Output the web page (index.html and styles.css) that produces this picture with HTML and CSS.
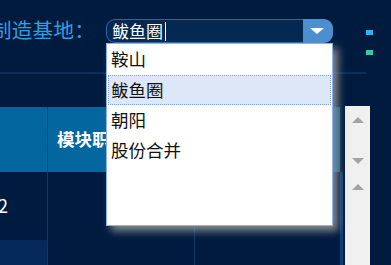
FILE: index.html
```html
<!DOCTYPE html>
<html lang="zh">
<head>
<meta charset="utf-8">
<link rel="stylesheet" href="styles.css">
</head>
<body>
<div class="page">
  <div class="topbar">
    <div class="label">制造基地：</div>
    <div class="combo">
      <div class="field"><span class="value">鲅鱼圈</span><span class="caret"></span></div>
      <div class="btn"><span class="tri-down"></span></div>
      <ul class="dropdown">
        <li class="opt">鞍山</li>
        <li class="opt active">鲅鱼圈</li>
        <li class="opt">朝阳</li>
        <li class="opt">股份合并</li>
      </ul>
    </div>
    <div class="legend">
      <span class="sq cyan"></span>
      <span class="sq teal"></span>
    </div>
  </div>
  <div class="rule"></div>
  <div class="main">
    <div class="table">
      <div class="row head">
        <div class="cell c1"></div>
        <div class="cell c2">模块职责</div>
        <div class="cell c3"></div>
      </div>
      <div class="row body r1">
        <div class="cell c1 num">2</div>
        <div class="cell c2"></div>
        <div class="cell c3"></div>
      </div>
      <div class="row body r2">
        <div class="cell c1"></div>
        <div class="cell c2"></div>
        <div class="cell c3"></div>
      </div>
    </div>
    <div class="scrollbar">
      <span class="arr up a1"></span>
      <span class="arr down a2"></span>
      <span class="arr up a3"></span>
    </div>
  </div>
</div>
</body>
</html>
```

FILE: styles.css
```css
* { box-sizing: border-box; }
html, body {
  margin: 0;
  padding: 0;
  background: #011b3e;
  overflow: hidden;
}
.page {
  width: 391px;
  height: 265px;
  font-family: "Noto Sans CJK SC", "Noto Sans", sans-serif;
}
.topbar {
  height: 72px;
  display: flex;
  align-items: flex-start;
}
.label {
  margin-left: -9px;
  margin-top: 14px;
  width: 115px;
  font-size: 20.5px;
  line-height: 30px;
  color: #2f9fe0;
  letter-spacing: 0.3px;
  white-space: nowrap;
}
.combo {
  position: relative;
  margin-top: 19px;
  display: flex;
  height: 24px;
  width: 227px;
}
.field {
  width: 197px;
  height: 24px;
  border: 1px solid #2a68ab;
  border-right: none;
  border-radius: 9px 0 0 9px;
  background: #052853;
  display: flex;
  align-items: center;
  padding-left: 5px;
}
.value {
  color: #ffffff;
  font-size: 17px;
  line-height: 22px;
}
.caret {
  width: 1px;
  height: 19px;
  background: #ffffff;
  margin-left: 2px;
}
.btn {
  width: 30px;
  height: 24px;
  background: #4c8fd0;
  border-radius: 0 9px 9px 0;
  display: flex;
  align-items: center;
  justify-content: center;
}
.tri-down {
  width: 0;
  height: 0;
  border-left: 7px solid transparent;
  border-right: 7px solid transparent;
  border-top: 6px solid #ffffff;
  margin-left: -3px;
}
.dropdown {
  position: absolute;
  left: 0;
  top: 24px;
  width: 227px;
  height: 183px;
  margin: 0;
  padding: 0 1px;
  list-style: none;
  background: #ffffff;
  border: 1px solid #8fb2ea;
  box-shadow: 5px 5px 8px rgba(150, 150, 150, 0.9);
  z-index: 5;
}
.opt {
  height: 30px;
  line-height: 28px;
  padding-left: 2px;
  font-size: 17.5px;
  color: #111111;
  border: 1px solid transparent;
}
.opt:first-child { height: 31px; }
.opt.active {
  background: #dee7f7;
  border: 1px dotted #7fa5e4;
}
.legend {
  margin-left: 33px;
  margin-top: 30px;
  display: flex;
  flex-direction: column;
  gap: 15px;
}
.sq {
  display: block;
  width: 7px;
  height: 5px;
}
.cyan { background: #2bb4f2; }
.teal { background: #38c9a6; }
.rule {
  width: 366px;
  height: 2px;
  background: #07305f;
}
.main {
  margin-top: 32px;
  display: flex;
  align-items: flex-start;
}
.table {
  width: 343px;
  margin-top: 1px;
}
.row {
  display: grid;
  grid-template-columns: 48px 147px 148px;
}
.cell {
  overflow: hidden;
  white-space: nowrap;
}
.head {
  height: 65px;
  background: #03669e;
}
.head .c1 { border-right: 1px solid #02497f; }
.head .c2 {
  padding-left: 9px;
  padding-top: 20px;
  font-size: 17.5px;
  font-weight: bold;
  color: #ffffff;
  line-height: 24px;
}
.head .c3 { border-right: 3px solid #011b3e; }
.body .cell { background: #011a40; }
.body .c1 { border-right: 1px solid #0b3a6c; }
.body .c2 { border-right: 1px solid #0b3a6c; }
.body .c3 { border-right: 3px solid #0b3d7a; }
.r1 { height: 69px; }
.r1 .c1 { border-bottom: 1px solid #062a58; }
.num {
  color: #ffffff;
  font-size: 18px;
  line-height: 24px;
  padding-top: 21px;
  text-indent: -2px;
}
.r2 { height: 30px; }
.r2 .c1 { background: #05295b; }
.scrollbar {
  margin-left: 2px;
  width: 25px;
  height: 160px;
  background: #f0f0f0;
  position: relative;
  display: flex;
  flex-direction: column;
  align-items: center;
}
.arr {
  display: block;
  width: 0;
  height: 0;
  border-left: 6px solid transparent;
  border-right: 6px solid transparent;
}
.up { border-bottom: 6px solid #a3a3a3; }
.down { border-top: 6px solid #a3a3a3; }
.a1 { margin-top: 11px; }
.a2 { margin-top: 35px; }
.a3 { margin-top: 20px; }
```
